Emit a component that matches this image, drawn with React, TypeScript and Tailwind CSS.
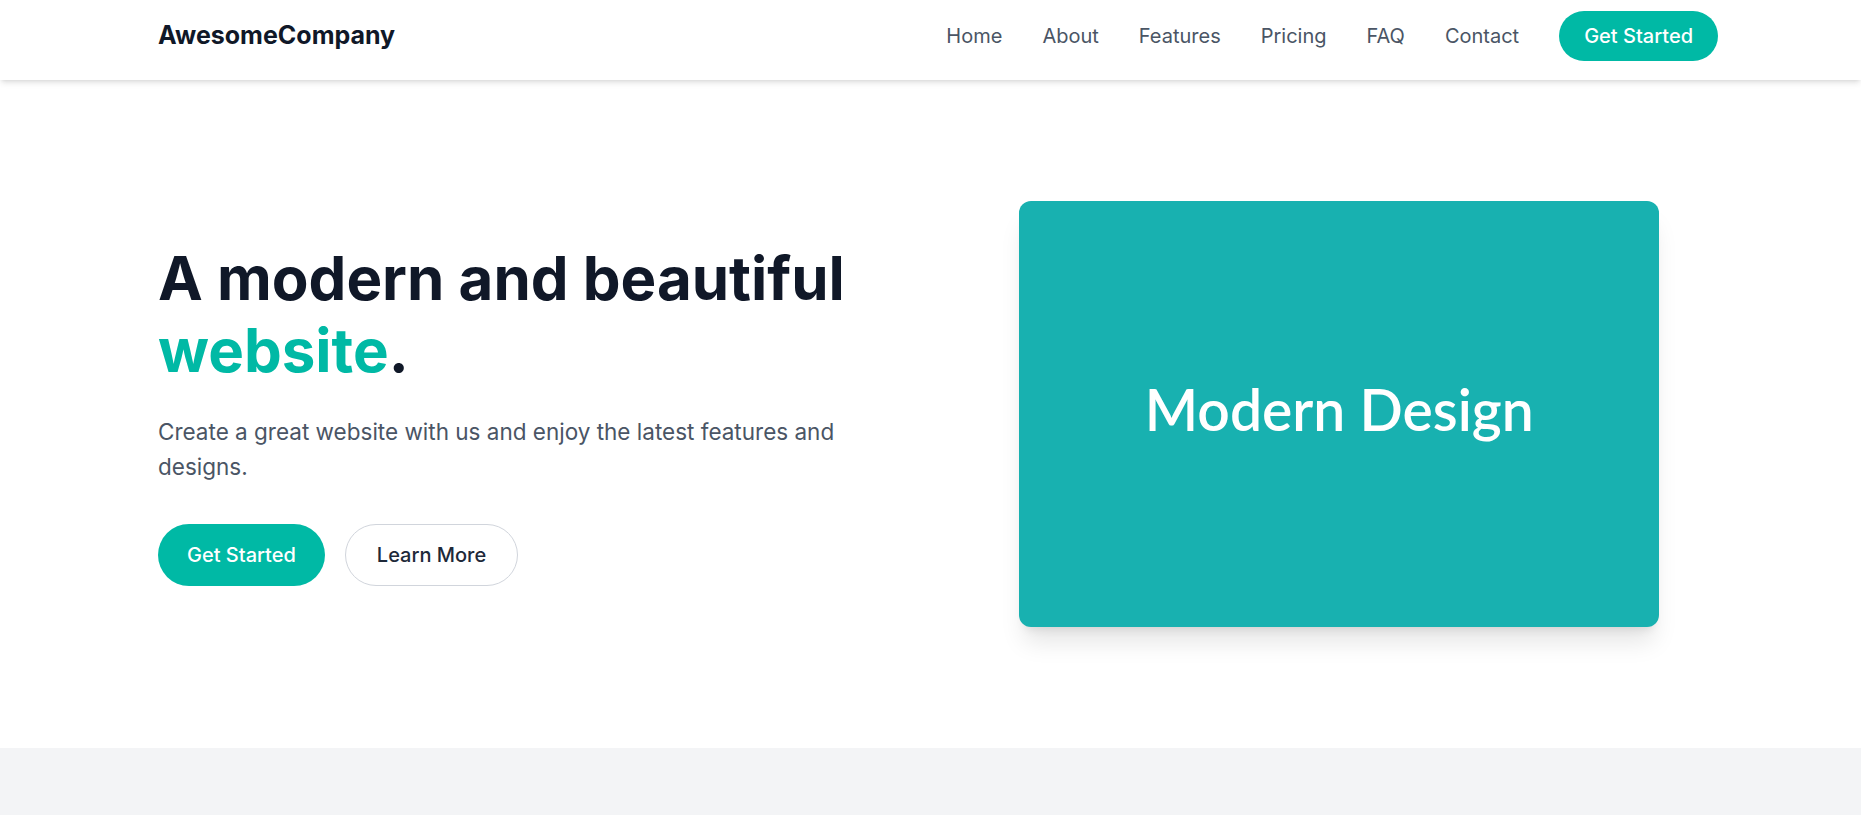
import React from "react";

const navLinks = ["Home", "About", "Features", "Pricing", "FAQ", "Contact"];

export default function App() {
  return (
    <div className="min-h-screen bg-white font-['Inter',sans-serif]">
      <header className="relative z-10 w-full bg-white shadow-md">
        <div className="flex h-20 items-start justify-between pl-[158px] pr-[143px] pt-[11px]">
          <div className="flex h-[50px] items-center text-[25px] font-bold text-gray-900">AwesomeCompany</div>
          <nav className="flex h-[50px] items-center gap-10 text-xl text-gray-600">
            {navLinks.map((l) => (
              <a key={l} href="#" className="hover:text-gray-900">
                {l}
              </a>
            ))}
            <a
              href="#"
              className="flex h-[50px] items-center rounded-full bg-[#00b9a5] px-[25px] text-xl font-medium text-white"
            >
              Get Started
            </a>
          </nav>
        </div>
      </header>

      <section className="grid h-[668px] grid-cols-2 items-center gap-12 pl-[158px] pr-[144px]">
        <div className="flex flex-col">
          <h1 className="text-6xl font-bold leading-[1.2] text-gray-900">
            A modern and beautiful <span className="text-[#00b9a5]">website</span>.
          </h1>
          <p className="mt-7 max-w-[720px] text-[22.5px] leading-[1.565] text-gray-600">
            Create a great website with us and enjoy the latest features and designs.
          </p>
          <div className="mt-10 flex gap-5">
            <a
              href="#"
              className="flex h-[62px] items-center rounded-full bg-[#00b9a5] px-[29px] text-xl font-medium text-white"
            >
              Get Started
            </a>
            <a
              href="#"
              className="flex h-[62px] items-center rounded-full border border-gray-300 bg-white px-[31px] text-xl font-medium text-gray-800"
            >
              Learn More
            </a>
          </div>
        </div>
        <div className="flex justify-center">
          <div className="flex h-[426px] w-[640px] items-center justify-center rounded-xl bg-[#18b1b0] shadow-xl">
            <span className="mb-[8px] font-['Lato',sans-serif] text-[57px] font-semibold text-white">Modern Design</span>
          </div>
        </div>
      </section>

      <section className="h-[200px] bg-gray-100"></section>
    </div>
  );
}
